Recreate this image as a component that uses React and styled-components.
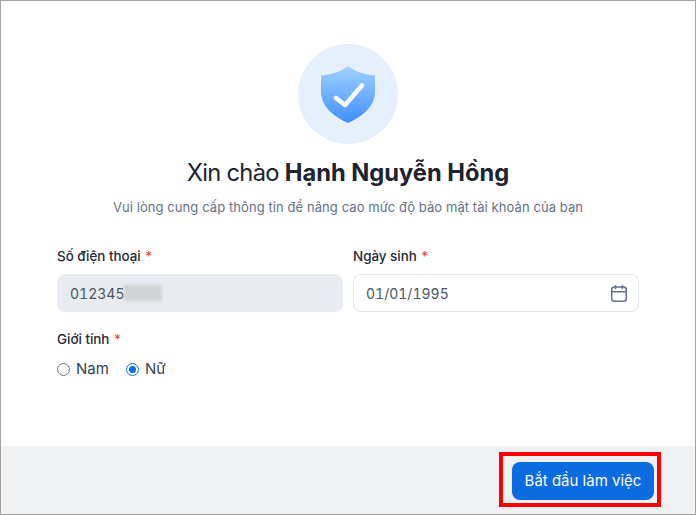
import React from "react";
import styled, { createGlobalStyle } from "styled-components";

const Global = createGlobalStyle`
  html, body { margin: 0; padding: 0; background: #fff; }
  body { font-family: Inter, "Noto Sans", sans-serif; }
`;
const Frame = styled.div`
  box-sizing: border-box; width: 696px; height: 515px; border: 1px solid #a3a3a3;
  display: flex; flex-direction: column; background: #fff; color: #1f2937;
`;
const Body = styled.main`
  flex: 1; padding: 43px 56px 0; display: flex; flex-direction: column;
`;
const Badge = styled.div`
  width: 100px; height: 100px; border-radius: 50%; background: #e6f0fd;
  align-self: center; display: flex; align-items: center; justify-content: center;
`;
const Title = styled.h1`
  margin: 14px 0 0; text-align: center; font-size: 23.7px; line-height: 30px; font-weight: 400; color: #1c2430;
  letter-spacing: -0.7px;
  b { font-weight: 700; letter-spacing: 0; }
`;
const Sub = styled.p`
  margin: 9px 0 0; text-align: center; font-size: 13px; line-height: 20px; color: #667085; letter-spacing: 0.08px;
`;
const Grid = styled.div`
  margin-top: 29px; display: grid; grid-template-columns: 286px 286px; column-gap: 10px;
`;
const Field = styled.div` display: flex; flex-direction: column; gap: 8px; `;
const Label = styled.label`
  font-size: 13.4px; line-height: 20px; font-weight: 500; color: #1f2937;
  i { font-style: normal; color: #e5484d; margin-left: 1px; }
`;
const Input = styled.div`
  box-sizing: border-box; height: 38px; border-radius: 8px; padding: 0 11px 0 12px;
  display: flex; align-items: center; justify-content: space-between;
  font-size: 14px; color: #4b5563; font-variant-numeric: tabular-nums;
  background: ${p => (p.$disabled ? "#e8ebef" : "#fff")};
  border: 1px solid ${p => (p.$disabled ? "#e8ebef" : "#e2e5ea")};
`;
const Masked = styled.span`
  display: flex; align-items: center;
`;
const Smudge = styled.span`
  display: inline-block; width: 38px; height: 16px; background: #d0d2d5; filter: blur(1.5px);
`;
const GenderField = styled(Field)` margin-top: 17px; gap: 10px; `;
const Radios = styled.div` display: flex; align-items: center; gap: 17px; `;
const RadioOption = styled.span`
  display: flex; align-items: center; gap: 6px; font-size: 15px; line-height: 20px; color: #374151;
`;
const Dot = styled.span`
  box-sizing: border-box; width: 13px; height: 13px; border-radius: 50%;
  border: 1px solid ${p => (p.$on ? "#0b6fe3" : "#767676")};
  display: flex; align-items: center; justify-content: center; background: #fff;
  &::after { content: ""; width: 7px; height: 7px; border-radius: 50%; background: ${p => (p.$on ? "#0b6fe3" : "transparent")}; }
`;
const Footer = styled.footer`
  position: relative; height: 68px; background: #f0f1f3; padding: 16px 41px 0 0;
  box-sizing: border-box; display: flex; justify-content: flex-end; align-items: flex-start;
`;
const Button = styled.button`
  width: 142px; height: 38px; border: 0; border-radius: 8px; background: #0b6be0; color: #fff;
  font: 400 15px/20px Inter, sans-serif; padding: 0;
`;
const Annotation = styled.div`
  position: absolute; left: 498px; top: 6px; width: 162px; height: 55px; box-sizing: border-box;
  border: 4px solid #ff0000; pointer-events: none;
`;

export default function App() {
  return (
    <Frame>
      <Global />
      <Body>
        <Badge>
          <svg width="54" height="57" viewBox="0 0 54 57">
            <defs>
              <linearGradient id="sh" x1="0" y1="0" x2="0" y2="1">
                <stop offset="0" stopColor="#a2d2ff" />
                <stop offset="1" stopColor="#3f8fff" />
              </linearGradient>
            </defs>
            <path d="M27 0 C33 5 42 8.500 54 9.500 L54 26 C54 40 41 51 27 57 C13 51 0 40 0 26 L0 9.500 C12 8.500 21 5 27 0 Z" fill="url(#sh)" />
            <path d="M15 32 L24 39 L41 19.500" fill="none" stroke="#fff" strokeWidth="4.500" strokeLinecap="round" strokeLinejoin="round" />
          </svg>
        </Badge>
        <Title>Xin chào <b>Hạnh Nguyễn Hồng</b></Title>
        <Sub>Vui lòng cung cấp thông tin để nâng cao mức độ bảo mật tài khoản của bạn</Sub>
        <Grid>
          <Field>
            <Label>Số điện thoại <i>*</i></Label>
            <Input $disabled><Masked>012345<Smudge /></Masked></Input>
          </Field>
          <Field>
            <Label>Ngày sinh <i>*</i></Label>
            <Input>
              01/01/1995
              <svg width="16" height="17" viewBox="0 0 16 17" fill="none" stroke="#667085" strokeWidth="1.500" strokeLinecap="round">
                <rect x="0.750" y="2" width="14.500" height="14.250" rx="2.500" />
                <path d="M0.750 6.750H15.250M4.500 0.750V3.500M11.500 0.750V3.500" />
              </svg>
            </Input>
          </Field>
        </Grid>
        <GenderField>
          <Label>Giới tính <i>*</i></Label>
          <Radios>
            <RadioOption><Dot />Nam</RadioOption>
            <RadioOption><Dot $on />Nữ</RadioOption>
          </Radios>
        </GenderField>
      </Body>
      <Footer>
        <Button>Bắt đầu làm việc</Button>
        <Annotation />
      </Footer>
    </Frame>
  );
}
